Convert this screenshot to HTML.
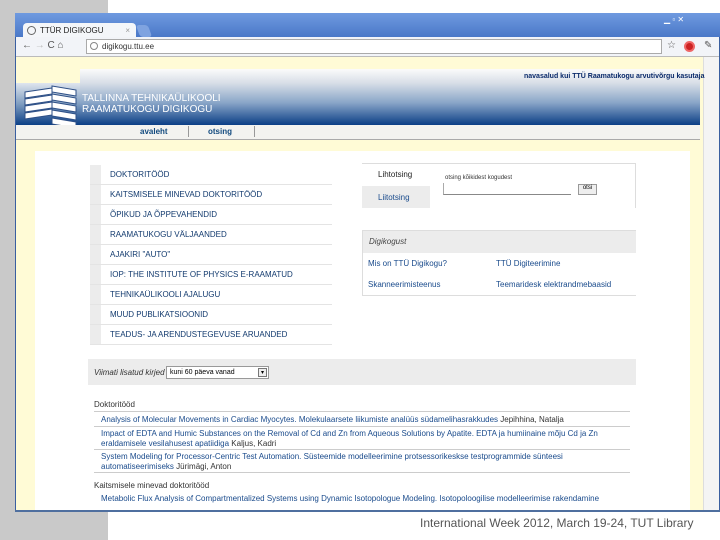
<!DOCTYPE html>
<html><head><meta charset="utf-8"><style>
*{margin:0;padding:0;box-sizing:border-box}
body{width:720px;height:540px;overflow:hidden;background:#fff;font-family:"Liberation Sans",sans-serif;position:relative}
.abs{position:absolute}
.menu div{position:absolute;left:90px;width:242px;height:20px;border-bottom:1px solid #e4e4e4;font-size:8px;color:#123a6e;padding:5px 0 0 20px;background:linear-gradient(90deg,#ececec 0,#ececec 11px,#fff 11px)}
.lnk{color:#1a4b8c;font-size:8px}
</style></head><body>
<div class="abs" style="left:0;top:0;width:108px;height:540px;background:#c9c9c9"></div>
<!-- window -->
<div class="abs" style="left:15px;top:13px;width:705px;height:498px;background:#4f7bc9;border:1px solid #3a5fa0"></div>
<div class="abs" style="left:15px;top:13px;width:705px;height:24px;background:linear-gradient(#6f9ae0,#4a78c8)"></div>
<div class="abs" style="left:23px;top:23px;width:113px;height:15px;background:#f4f6f9;border-radius:4px 4px 0 0;font-size:8px;color:#222;padding:3px 0 0 17px">TTÜR DIGIKOGU<span style="position:absolute;right:6px;color:#999">×</span></div>
<div class="abs" style="left:27px;top:26px;width:9px;height:9px;border-radius:50%;border:1px solid #666"></div>
<div class="abs" style="left:138px;top:25px;width:12px;height:12px;background:#7fa3e0;border-radius:3px;transform:skewX(20deg)"></div>
<div class="abs" style="left:664px;top:15px;font-size:8px;color:#fff">▁ ▫ ✕</div>
<div class="abs" style="left:16px;top:37px;width:703px;height:20px;background:#f2f4f8;border-bottom:1px solid #bbb"></div>
<div class="abs" style="left:22px;top:40px;font-size:10px;color:#555">← <span style="color:#bbb">→</span> C ⌂</div>
<div class="abs" style="left:86px;top:39px;width:576px;height:15px;background:#fff;border:1px solid #aaa;font-size:8px;color:#333;padding:2px 0 0 15px">digikogu.ttu.ee</div>
<div class="abs" style="left:90px;top:42px;width:8px;height:8px;border-radius:50%;border:1px solid #888"></div>
<div class="abs" style="left:667px;top:40px;font-size:10px;color:#555">☆</div>
<div class="abs" style="left:684px;top:41px;width:11px;height:11px;border-radius:50%;background:#c22;border:2px solid #e66"></div>
<div class="abs" style="left:704px;top:40px;font-size:10px;color:#555">✎</div>
<!-- content -->
<div class="abs" style="left:16px;top:57px;width:687px;height:453px;background:#fffbd6"></div>
<div class="abs" style="left:703px;top:57px;width:16px;height:453px;background:#f4f4f4;border-left:1px solid #ddd"></div>
<div class="abs" style="left:16px;top:83px;width:684px;height:42px;background:linear-gradient(#dfe5ee,#7f9dc0 50%,#0b3f86)"></div>
<div class="abs" style="left:80px;top:69px;width:620px;height:56px;background:linear-gradient(#fbfbfb 0,#d8dee7 25%,#8aa6c8 60%,#0b3f86 100%)"></div>
<div class="abs" style="left:524px;top:73px;font-size:7px;color:#0a2a6a;font-weight:bold">navasalud kui TTÜ Raamatukogu arvutivõrgu kasutaja</div>
<svg class="abs" style="left:22px;top:84px" width="58" height="46"><g fill="#fff" stroke="#2d4f86" stroke-width="1"><path d="M3 8 L30 4 L30 10 L3 14Z"/><path d="M3 15 L30 11 L30 17 L3 21Z"/><path d="M3 22 L30 18 L30 24 L3 28Z"/><path d="M3 29 L30 25 L30 31 L3 35Z"/><path d="M30 2 L54 6 L54 12 L30 8Z"/><path d="M30 10 L54 14 L54 20 L30 16Z"/><path d="M30 18 L54 22 L54 28 L30 24Z"/><path d="M30 26 L54 30 L54 36 L30 32Z"/><path d="M30 34 L54 38 L54 44 L30 40Z"/></g></svg>
<div class="abs" style="left:82px;top:93px;font-size:10px;color:#fff;line-height:11px">TALLINNA TEHNIKAÜLIKOOLI<br>RAAMATUKOGU DIGIKOGU</div>
<div class="abs" style="left:16px;top:125px;width:684px;height:15px;background:#f3f3f0;border-bottom:1px solid #aaa"></div>
<div class="abs" style="left:140px;top:127px;font-size:8px;color:#124a7e;font-weight:bold">avaleht</div>
<div class="abs" style="left:188px;top:126px;width:1px;height:11px;background:#999"></div>
<div class="abs" style="left:208px;top:127px;font-size:8px;color:#124a7e;font-weight:bold">otsing</div>
<div class="abs" style="left:254px;top:126px;width:1px;height:11px;background:#999"></div>
<!-- main -->
<div class="abs" style="left:35px;top:151px;width:655px;height:359px;background:#fff"></div>
<div class="menu">
<div style="top:165px">DOKTORITÖÖD</div>
<div style="top:185px">KAITSMISELE MINEVAD DOKTORITÖÖD</div>
<div style="top:205px">ÕPIKUD JA ÕPPEVAHENDID</div>
<div style="top:225px">RAAMATUKOGU VÄLJAANDED</div>
<div style="top:245px">AJAKIRI "AUTO"</div>
<div style="top:265px">IOP: THE INSTITUTE OF PHYSICS E-RAAMATUD</div>
<div style="top:285px">TEHNIKAÜLIKOOLI AJALUGU</div>
<div style="top:305px">MUUD PUBLIKATSIOONID</div>
<div style="top:325px">TEADUS- JA ARENDUSTEGEVUSE ARUANDED</div>
</div>
<div class="abs" style="left:362px;top:163px;width:274px;height:45px;border-top:1px solid #ddd;border-right:1px solid #ddd"></div>
<div class="abs" style="left:362px;top:186px;width:68px;height:22px;background:#ececec"></div>
<div class="abs" style="left:378px;top:170px;font-size:8px;color:#222">Lihtotsing</div>
<div class="abs" style="left:378px;top:193px;font-size:8px;color:#1a4b8c">Liitotsing</div>
<div class="abs" style="left:445px;top:175px;font-size:6px;color:#333">otsing kõikidest kogudest</div>
<div class="abs" style="left:443px;top:183px;width:128px;height:12px;border-bottom:1px solid #888;border-left:1px solid #aaa"></div>
<div class="abs" style="left:578px;top:184px;width:19px;height:11px;border:1px solid #999;background:#eee;font-size:6px;text-align:center">otsi</div>
<div class="abs" style="left:362px;top:230px;width:274px;height:66px;border:1px solid #ddd;border-right:none"></div>
<div class="abs" style="left:363px;top:231px;width:273px;height:22px;background:#ececec;font-size:8px;font-style:italic;color:#444;padding:6px 0 0 6px">Digikogust</div>
<div class="abs lnk" style="left:368px;top:259px">Mis on TTÜ Digikogu?</div>
<div class="abs lnk" style="left:496px;top:259px">TTÜ Digiteerimine</div>
<div class="abs lnk" style="left:368px;top:280px">Skanneerimisteenus</div>
<div class="abs lnk" style="left:496px;top:280px">Teemaridesk elektrandmebaasid</div>
<div class="abs" style="left:88px;top:359px;width:548px;height:26px;background:#ececec"></div>
<div class="abs" style="left:94px;top:368px;font-size:8px;font-style:italic;color:#333">Viimati lisatud kirjed</div>
<div class="abs" style="left:166px;top:366px;width:103px;height:13px;border:1px solid #999;background:#fff;font-size:7px;padding:2px 3px">kuni 60 päeva vanad</div>
<div class="abs" style="left:258px;top:368px;width:9px;height:9px;border:1px solid #777;background:#eee;font-size:6px;text-align:center">▾</div>
<div class="abs" style="left:94px;top:400px;font-size:8px;color:#333">Doktoritööd</div>
<div class="abs" style="left:94px;top:411px;width:536px;height:1px;background:#ccc"></div>
<div class="abs lnk" style="left:101px;top:415px">Analysis of Molecular Movements in Cardiac Myocytes. Molekulaarsete liikumiste analüüs südamelihasrakkudes <span style="color:#333">Jepihhina, Natalja</span></div>
<div class="abs" style="left:94px;top:426px;width:536px;height:1px;background:#ccc"></div>
<div class="abs lnk" style="left:101px;top:429px;width:530px;line-height:10px">Impact of EDTA and Humic Substances on the Removal of Cd and Zn from Aqueous Solutions by Apatite. EDTA ja humiinaine mõju Cd ja Zn eraldamisele vesilahusest apatiidiga <span style="color:#333">Kaljus, Kadri</span></div>
<div class="abs" style="left:94px;top:449px;width:536px;height:1px;background:#ccc"></div>
<div class="abs lnk" style="left:101px;top:452px;width:530px;line-height:10px">System Modeling for Processor-Centric Test Automation. Süsteemide modelleerimine protsessorikeskse testprogrammide sünteesi automatiseerimiseks <span style="color:#333">Jürimägi, Anton</span></div>
<div class="abs" style="left:94px;top:472px;width:536px;height:1px;background:#ccc"></div>
<div class="abs" style="left:94px;top:481px;font-size:8px;color:#333">Kaitsmisele minevad doktoritööd</div>
<div class="abs lnk" style="left:101px;top:494px;width:530px;line-height:10px">Metabolic Flux Analysis of Compartmentalized Systems using Dynamic Isotopologue Modeling. Isotopoloogilise modelleerimise rakendamine</div>
<div class="abs" style="left:15px;top:510px;width:705px;height:2px;background:#4f6f9f"></div>
<div class="abs" style="left:108px;top:512px;width:612px;height:28px;background:#fff"></div>
<div class="abs" style="left:420px;top:516px;font-size:12px;color:#555">International Week 2012, March 19-24, TUT Library</div>
</body></html>
